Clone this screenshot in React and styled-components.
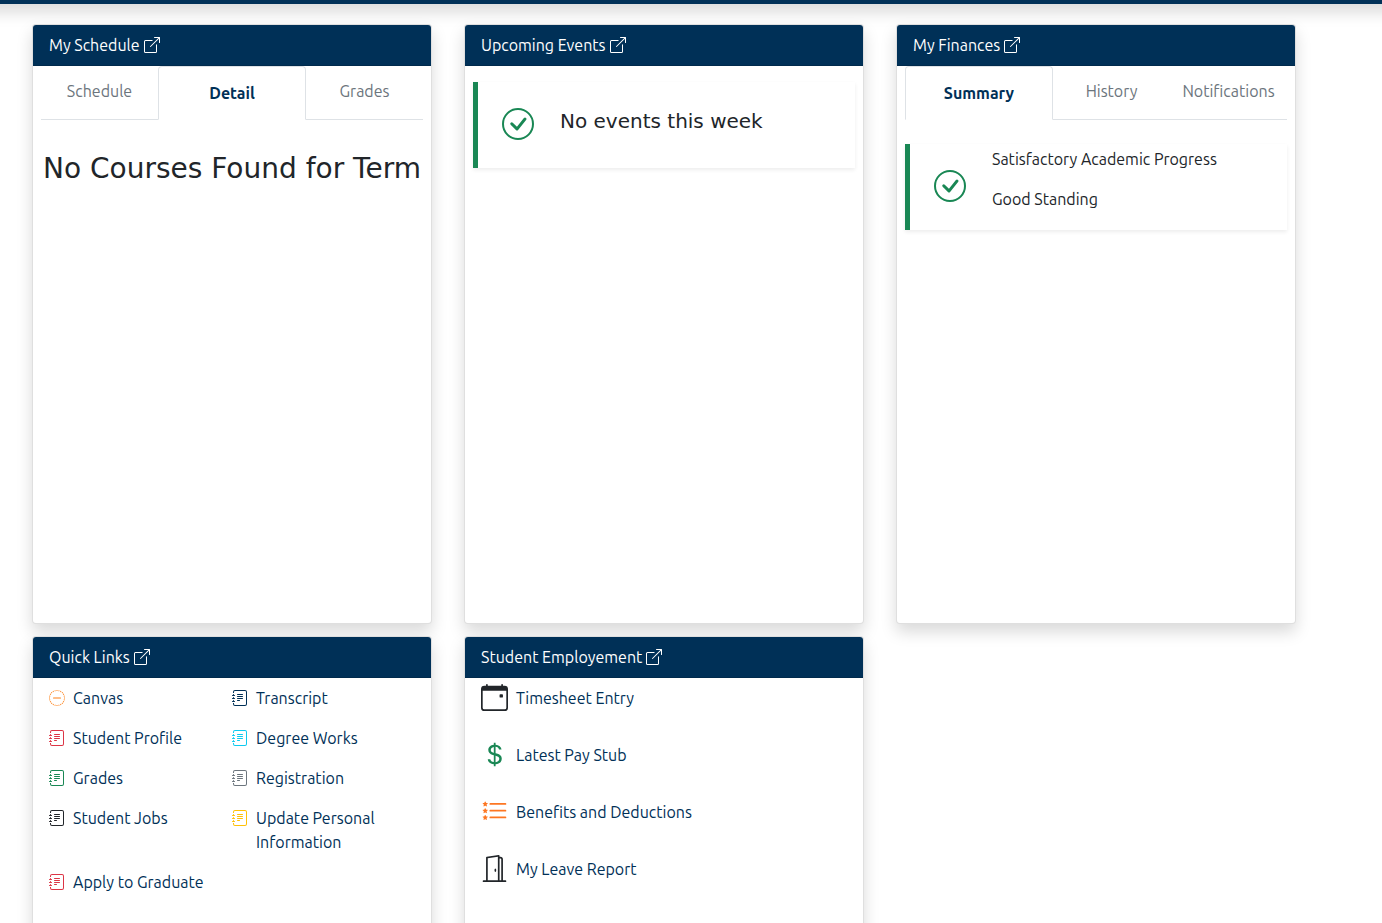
import React, { useState } from "react";
import styled, { createGlobalStyle } from "styled-components";
// icons
import {
	BsBoxArrowUpRight,
	BsCalendarEvent,
	BsCheckCircle,
	BsCurrencyDollar,
	BsDashCircleDotted,
	BsDoorOpen,
	BsJournalText,
	BsListStars
} from "react-icons/bs";

const navy = "#003057";
const green = "#198754";
const dark = "#212529";

//CSS
const GlobalStyle = createGlobalStyle`
	* { box-sizing: border-box; }
	body {
		margin: 0;
		background: #fff;
		color: ${dark};
		font-family: Ubuntu, "Noto Sans", sans-serif;
		font-size: 16px;
		line-height: 24px;
	}
	h2, h3, h4, p, ul { margin: 0; padding: 0; }
	svg { display: block; flex: none; }
`;

const TopBar = styled.header`
	height: 4px;
	background: ${navy};
	box-shadow: 0 -12px 16px 20px rgba(0, 0, 0, 0.15);
`;

const Board = styled.main`
	display: grid;
	grid-template-columns: repeat(auto-fit, minmax(360px, 1fr));
	gap: 12px 32px;
	max-width: 1328px;
	padding: 20px 32px;
`;

const StyledCard = styled.section`
	display: flex;
	flex-direction: column;
	min-height: 600px;
	background: #fff;
	background-clip: border-box;
	border: 1px solid rgba(0, 0, 0, 0.125);
	border-radius: 4px;
	box-shadow: 0 8px 16px rgba(0, 0, 0, 0.15);
`;

const CardHeader = styled.div`
	display: flex;
	align-items: center;
	gap: 4px;
	padding: 8px 16px;
	background: ${navy};
	border-bottom: 1px solid rgba(0, 0, 0, 0.125);
	border-radius: 3px 3px 0 0;
	color: #fff;
`;

const CardTitle = styled.h2`
	font-size: 16px;
	line-height: 24px;
	font-weight: 400;
`;

const OpenLink = styled.a`
	color: inherit;
	font-size: 16px;
`;

const CardBody = styled.div`
	padding: ${props => props.$padding || "0 8px"};
`;

const TabList = styled.div`
	display: flex;
	height: 54px;
`;

const Tab = styled.button`
	flex: ${props => (props.$active ? "0 0 148px" : "1 1 0")};
	min-width: 0;
	padding: ${props => (props.$active ? "4px" : "0")} 0 4px;
	background: none;
	border: 1px solid;
	border-color: ${props => (props.$active ? "#dee2e6 #dee2e6 transparent" : "transparent transparent #dee2e6")};
	border-width: ${props => (props.$active ? "1px" : "0 0 1px")};
	border-radius: ${props => (props.$active ? "4px 4px 0 0" : "0")};
	color: ${props => (props.$active ? navy : "#6c757d")};
	font: inherit;
	font-weight: ${props => (props.$active ? 700 : 400)};
	cursor: pointer;
`;

const EmptyTitle = styled.h3`
	margin-top: 32px;
	font-family: "DejaVu Sans", sans-serif;
	font-size: 28px;
	line-height: 34px;
	font-weight: 400;
	text-align: center;
`;

const Notice = styled.div`
	display: flex;
	align-items: center;
	gap: 26px;
	min-height: 86px;
	margin-top: ${props => props.$top};
	padding: 3px 24px 5px;
	border-left: 5px solid ${green};
	box-shadow: 0 2px 4px rgba(0, 0, 0, 0.075);

	> svg { font-size: 32px; color: ${green}; }
`;

const NoticeTitle = styled.h4`
	padding-bottom: 6px;
	font-family: "DejaVu Sans", sans-serif;
	font-size: 20px;
	line-height: 24px;
	font-weight: 400;
`;

const NoticeText = styled.div`
	align-self: flex-start;

	p { margin-bottom: 16px; }
	p:last-child { margin-bottom: 0; }
`;

const LinkGrid = styled.ul`
	display: grid;
	grid-template-columns: 1fr 1fr;
	row-gap: 16px;
	list-style: none;
`;

const LinkColumn = styled.ul`
	display: grid;
	row-gap: 30px;
	list-style: none;
`;

const IconLink = styled.a`
	display: flex;
	align-items: ${props => (props.$large ? "center" : "flex-start")};
	gap: 8px;
	color: ${navy};
	text-decoration: none;

	svg {
		margin-top: ${props => (props.$large ? "0" : "4px")};
		font-size: ${props => (props.$large ? "27px" : "16px")};
		color: ${props => props.$tint};
	}
`;

const quickLinks = [
	{ name: "Canvas", icon: BsDashCircleDotted, tint: "#fd7e14" },
	{ name: "Transcript", icon: BsJournalText, tint: navy },
	{ name: "Student Profile", icon: BsJournalText, tint: "#dc3545" },
	{ name: "Degree Works", icon: BsJournalText, tint: "#0dcaf0" },
	{ name: "Grades", icon: BsJournalText, tint: green },
	{ name: "Registration", icon: BsJournalText, tint: "#6c757d" },
	{ name: "Student Jobs", icon: BsJournalText, tint: dark },
	{ name: "Update Personal Information", icon: BsJournalText, tint: "#ffc107" },
	{ name: "Apply to Graduate", icon: BsJournalText, tint: "#dc3545" }
];

const employmentLinks = [
	{ name: "Timesheet Entry", icon: BsCalendarEvent, tint: dark },
	{ name: "Latest Pay Stub", icon: BsCurrencyDollar, tint: green },
	{ name: "Benefits and Deductions", icon: BsListStars, tint: "#fd7622" },
	{ name: "My Leave Report", icon: BsDoorOpen, tint: dark }
];

function Card({ title, padding, children }) {
	return (
		<StyledCard>
			<CardHeader>
				<CardTitle>{title}</CardTitle>
				<OpenLink href="#" aria-label={"Open " + title}><BsBoxArrowUpRight /></OpenLink>
			</CardHeader>
			<CardBody $padding={padding}>{children}</CardBody>
		</StyledCard>
	);
}

function Tabs({ names, active, onSelect }) {
	return (
		<TabList role="tablist">
			{names.map(name =>
				<Tab
					key={name}
					type="button"
					role="tab"
					aria-selected={name === active}
					$active={name === active}
					onClick={() => onSelect(name)}
				>
					{name}
				</Tab>
			)}
		</TabList>
	);
}

function Links({ links, large }) {
	return links.map(({ name, icon: Icon, tint }) =>
		<li key={name}>
			<IconLink href="#" $large={large} $tint={tint}>
				<Icon />
				<span>{name}</span>
			</IconLink>
		</li>
	);
}

function App() {
	const [scheduleTab, setScheduleTab] = useState("Detail");
	const [financeTab, setFinanceTab] = useState("Summary");

	return (
		<>
			<GlobalStyle />
			<TopBar />
			<Board>
				<Card title="My Schedule">
					<Tabs names={["Schedule", "Detail", "Grades"]} active={scheduleTab} onSelect={setScheduleTab} />
					<EmptyTitle>No Courses Found for Term</EmptyTitle>
				</Card>
				<Card title="Upcoming Events">
					<Notice $top="16px">
						<BsCheckCircle />
						<NoticeTitle>No events this week</NoticeTitle>
					</Notice>
				</Card>
				<Card title="My Finances">
					<Tabs names={["Summary", "History", "Notifications"]} active={financeTab} onSelect={setFinanceTab} />
					<Notice $top="24px">
						<BsCheckCircle />
						<NoticeText>
							<p>Satisfactory Academic Progress</p>
							<p>Good Standing</p>
						</NoticeText>
					</Notice>
				</Card>
				<Card title="Quick Links" padding="8px 16px">
					<LinkGrid><Links links={quickLinks} /></LinkGrid>
				</Card>
				<Card title="Student Employement" padding="6px 16px">
					<LinkColumn><Links links={employmentLinks} large /></LinkColumn>
				</Card>
			</Board>
		</>
	);
}

export default App;
